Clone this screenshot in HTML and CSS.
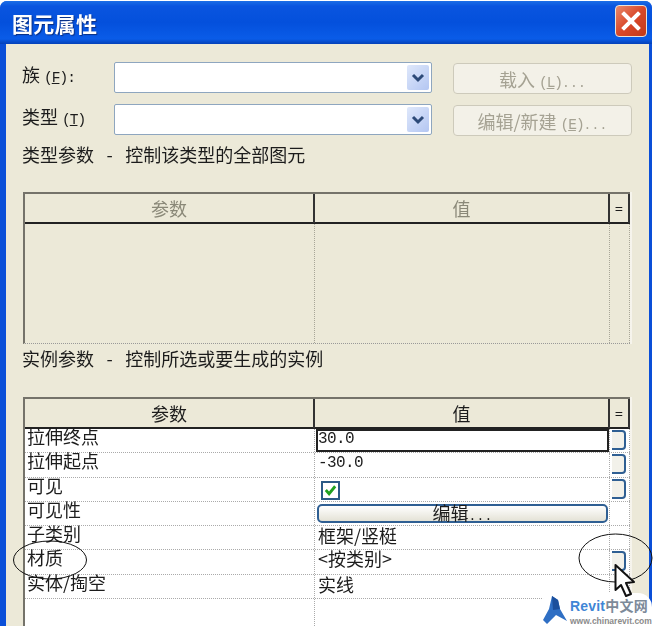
FILE: index.html
```html
<!DOCTYPE html>
<html>
<head>
  <meta charset="utf-8">
  <title>图元属性</title>
  <link rel="stylesheet" href="styles.css">
</head>
<body>
  <div class="window">
    <div class="titlebar">
      <span class="title">图元属性</span>
      <div class="close">
        <svg width="24" height="24" viewBox="0 0 24 24"><path d="M5 5 L19 19 M19 5 L5 19" stroke="#fff" stroke-width="4" stroke-linecap="square"/></svg>
      </div>
    </div>
    <div class="content">
      <div class="form-row first">
        <label class="form-label">族 <span class="key">(<u>F</u>):</span></label>
        <div class="combo">
          <div class="combo-btn"><svg width="14" height="10" viewBox="0 0 14 10"><path d="M2 2 L7 7 L12 2" fill="none" stroke="#2d4a78" stroke-width="3"/></svg></div>
        </div>
        <button class="btn-disabled">载入 <span class="key">(<u>L</u>)<span class="dots">...</span></span></button>
      </div>
      <div class="form-row">
        <label class="form-label">类型 <span class="key">(<u>T</u>)</span></label>
        <div class="combo">
          <div class="combo-btn"><svg width="14" height="10" viewBox="0 0 14 10"><path d="M2 2 L7 7 L12 2" fill="none" stroke="#2d4a78" stroke-width="3"/></svg></div>
        </div>
        <button class="btn-disabled">编辑/新建 <span class="key">(<u>E</u>)<span class="dots">...</span></span></button>
      </div>

      <p class="section type-section">类型参数 - 控制该类型的全部图元</p>
      <div class="grid grid-type">
        <div class="grid-head">
          <div class="hcell muted">参数</div>
          <div class="hcell muted">值</div>
          <div class="hcell eq">=</div>
        </div>
        <div class="empty-body">
          <div class="ecell"></div>
          <div class="ecell"></div>
          <div class="ecell"></div>
        </div>
      </div>

      <p class="section inst-section">实例参数 - 控制所选或要生成的实例</p>
      <div class="grid grid-inst">
        <div class="grid-head">
          <div class="hcell">参数</div>
          <div class="hcell">值</div>
          <div class="hcell eq">=</div>
        </div>
        <div class="row">
          <div class="cell">拉伸终点</div>
          <div class="cell"><div class="value-edit">30.0</div></div>
          <div class="cell last"><span class="mini"></span></div>
        </div>
        <div class="row">
          <div class="cell">拉伸起点</div>
          <div class="cell num">-30.0</div>
          <div class="cell last"><span class="mini"></span></div>
        </div>
        <div class="row">
          <div class="cell">可见</div>
          <div class="cell">
            <span class="check"><svg width="16" height="14" viewBox="0 0 16 14"><path d="M3 7 L6.5 11 L13 3" fill="none" stroke="#21a121" stroke-width="3"/></svg></span>
          </div>
          <div class="cell last"><span class="mini"></span></div>
        </div>
        <div class="row">
          <div class="cell">可见性</div>
          <div class="cell"><div class="edit-btn">编辑<span class="dots">...</span></div></div>
          <div class="cell last"></div>
        </div>
        <div class="row">
          <div class="cell">子类别</div>
          <div class="cell">框架/竖梃</div>
          <div class="cell last"></div>
        </div>
        <div class="row">
          <div class="cell">材质</div>
          <div class="cell tight">&lt;按类别&gt;</div>
          <div class="cell last"><span class="mini"></span></div>
        </div>
        <div class="row">
          <div class="cell">实体/掏空</div>
          <div class="cell">实线</div>
          <div class="cell last"></div>
        </div>
        <div class="row tail">
          <div class="cell"></div>
          <div class="cell"></div>
          <div class="cell last"></div>
        </div>
      </div>
    </div>
  </div>

  <div class="watermark">
    <svg class="wm-logo" width="24" height="28" viewBox="0 0 24 28">
      <path d="M9 0 L15 4 L17 13 L24 25 L13 19 L4 28 L0 24 L6 13 Z" fill="#2f6fc4"/>
      <path d="M9 0 L15 4 L17 13 L10 14 Z" fill="#1b4f9c"/>
    </svg>
    <div class="wm-text">
      <div class="wm-name">Revit<span class="wm-cn">中文网</span></div>
      <div class="wm-url">www.chinarevit.com</div>
    </div>
  </div>

  <!-- hand drawn notes over the screenshot -->
  <svg class="notes" width="654" height="630" viewBox="0 0 654 630">
    <ellipse cx="50" cy="560" rx="36.5" ry="19" fill="none" stroke="#111" stroke-width="1"/>
    <ellipse cx="615.5" cy="558" rx="36.5" ry="24" fill="none" stroke="#111" stroke-width="1"/>
    <path d="M615.5 565 V590 L621 585 L626 596 L631 594 L626 583 L634 582 Z" fill="#fff" stroke="#111" stroke-width="2" stroke-linejoin="round"/>
  </svg>
</body>
</html>
```

FILE: styles.css
```css
html, body {
  margin: 0;
  padding: 0;
}
body {
  width: 654px;
  height: 630px;
  background: #fff;
  position: relative;
  overflow: hidden;
  font-family: "Noto Sans CJK SC", "Liberation Sans", sans-serif;
  font-size: 18px;
  color: #1c1c1c;
}
.window {
  width: 652px;
  height: 625px;
  margin-top: 1px;
  background: #0a4fd8;
  border-radius: 7px 7px 0 0;
  overflow: hidden;
  box-sizing: border-box;
  padding: 0 3px 0 6px;
  filter: blur(0.35px);
}
.titlebar {
  height: 43px;
  margin: 0 -3px 0 -6px;
  padding: 0 5px 0 12px;
  display: flex;
  align-items: center;
  justify-content: space-between;
  background: linear-gradient(#1c6ee6 0%, #0a55df 12%, #0450dc 50%, #0a5ce8 88%, #0340b8 100%);
}
.title {
  color: #fff;
  font-size: 21px;
  font-weight: 700;
  letter-spacing: 0.3px;
  text-shadow: 1px 1px 1px #0b2f80;
}
.close {
  width: 30px;
  height: 30px;
  border: 1px solid #e8e4dc;
  border-radius: 4px;
  background: linear-gradient(135deg, #e88a6c, #d9482a 50%, #c23a1a);
  display: flex;
  align-items: center;
  justify-content: center;
  margin-top: -3px;
}
.content {
  background: #ece9d8;
  height: 582px;
  padding: 18px 0 0 16px;
  box-sizing: border-box;
  overflow: hidden;
}
.form-row {
  display: flex;
  align-items: center;
  height: 31px;
  margin-bottom: 11px;
}
.form-label {
  width: 92px;
  flex: none;
  line-height: 31px;
  margin-top: -3px;
}
.key {
  font-family: "Liberation Mono", monospace;
  font-size: 14.5px;
  letter-spacing: -1px;
}
.dots {
  font-family: "Liberation Mono", monospace;
  font-size: 13px;
  letter-spacing: 0.2px;
}
.combo {
  width: 318px;
  height: 31px;
  box-sizing: border-box;
  background: #fff;
  border: 1.5px solid #8ea6bf;
  border-radius: 2px;
  flex: none;
  display: flex;
  justify-content: flex-end;
  padding: 2px;
}
.combo-btn {
  width: 22px;
  background: linear-gradient(135deg, #dfe8fb, #b3c6f2);
  border-radius: 2px;
  display: flex;
  align-items: center;
  justify-content: center;
}
.btn-disabled {
  width: 179px;
  height: 31px;
  margin: 2px 0 0 21px;
  flex: none;
  background: #f3f1e8;
  border: 1.5px solid #cdcabb;
  border-radius: 4px;
  color: #a5a293;
  font-family: "Noto Sans CJK SC", sans-serif;
  font-size: 18px;
  padding: 0;
  white-space: nowrap;
}
.section {
  margin: 0;
  line-height: 24px;
  font-size: 18px;
  word-spacing: 8.5px;
}
.type-section {
  margin-top: -4px;
}
.inst-section {
  margin-top: 2px;
}
.grid {
  width: 607px;
  margin-left: 1px;
  box-sizing: border-box;
  border-left: 2px solid #75736a;
  border-top: 2px solid #75736a;
}
.grid-type {
  height: 152px;
  margin-top: 26px;
  display: flex;
  flex-direction: column;
  border-bottom: 1px dotted #999;
  box-shadow: 2px 0 0 #f6f4ec;
}
.grid-inst {
  height: 240px;
  margin-top: 27px;
  background: #fff;
  box-shadow: 2px 0 0 #f6f4ec;
}
.grid-head {
  display: grid;
  grid-template-columns: 290px 295px 20px;
  height: 28px;
  border-bottom: 2px solid #222;
  background: #ece9d8;
}
.hcell {
  text-align: center;
  line-height: 29px;
  border-right: 2px solid #333;
  box-sizing: border-box;
}
.hcell.muted {
  color: #8a8878;
}
.hcell.eq {
  font-size: 14px;
}
.empty-body {
  flex: 1;
  display: grid;
  grid-template-columns: 290px 295px 20px;
}
.ecell {
  border-right: 1px dotted #a8a698;
  box-sizing: border-box;
}
.row {
  display: grid;
  grid-template-columns: 290px 295px 20px;
  height: 24.3px;
  box-sizing: border-box;
  border-bottom: 1px dotted #aaa;
}
.row.tail {
  height: 60px;
}
.cell {
  position: relative;
  box-sizing: border-box;
  border-right: 1px dotted #aaa;
  padding-left: 2px;
  line-height: 15px;
  white-space: nowrap;
}
.cell + .cell {
  padding-left: 3px;
  line-height: 19px;
}
.cell.tight {
  line-height: 17px;
}
.cell.last {
  padding: 1px 0 0 2px;
}
.cell.num,
.value-edit {
  font-family: "Liberation Mono", monospace;
  font-size: 16px;
  letter-spacing: -0.6px;
}
.cell.num {
  line-height: 20px;
}
.value-edit {
  height: 23px;
  margin: 0 0 0 -2px;
  width: 293px;
  box-sizing: border-box;
  border: 2px solid #222;
  background: #fff;
  line-height: 17px;
}
.mini {
  display: block;
  width: 14px;
  height: 20px;
  box-sizing: border-box;
  border: 2px solid #2f5f93;
  border-left: 0;
  border-radius: 0 4px 4px 0;
  background: #f2f1ea;
}
.check {
  display: flex;
  align-items: center;
  justify-content: center;
  width: 19px;
  height: 19px;
  margin: 3px 0 0 3px;
  box-sizing: border-box;
  border: 2px solid #2b5a86;
  background: #fff;
}
.edit-btn {
  height: 19px;
  margin: 2px 0 0 -1px;
  width: 291px;
  box-sizing: border-box;
  border: 2px solid #2f5f93;
  border-radius: 5px;
  background: linear-gradient(#fff, #e4e2d6);
  text-align: center;
  line-height: 12px;
}
.notes {
  position: absolute;
  left: 0;
  top: 0;
}
.watermark {
  position: absolute;
  left: 540px;
  top: 593px;
  width: 112px;
  height: 37px;
  background: #fff;
  border-radius: 14px 14px 0 0;
  display: flex;
  gap: 3px;
  padding: 3px 0 0 3px;
  box-sizing: border-box;
}
.wm-name {
  font-family: "Liberation Sans", sans-serif;
  font-size: 14px;
  font-weight: 700;
  color: #3f86d6;
  line-height: 18px;
  letter-spacing: 0.2px;
}
.wm-cn {
  font-family: "Noto Sans CJK SC", sans-serif;
  color: #7d8a99;
}
.wm-url {
  font-family: "Liberation Sans", sans-serif;
  font-size: 8.5px;
  font-weight: 700;
  color: #8b8b8b;
  line-height: 10px;
  margin-top: 1px;
  white-space: nowrap;
}
```
